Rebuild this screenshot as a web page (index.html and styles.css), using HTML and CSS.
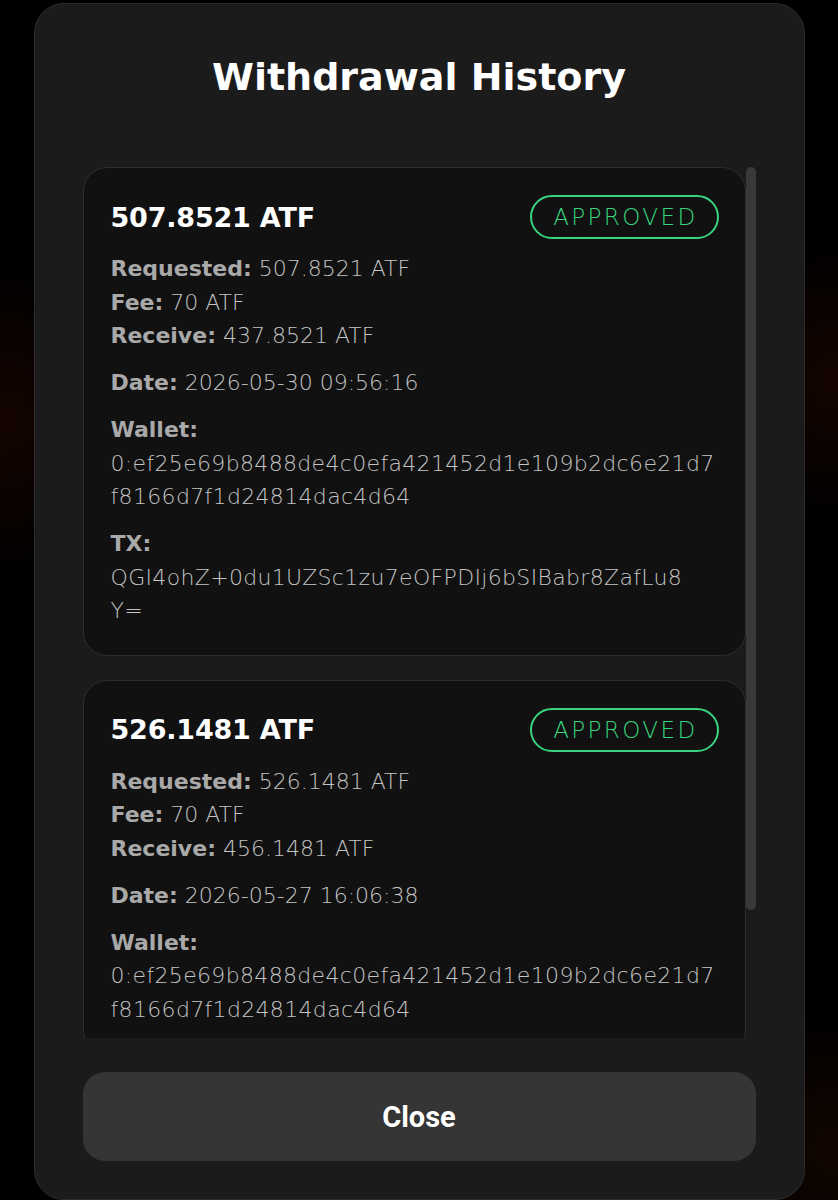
FILE: index.html
```html
<!DOCTYPE html>
<html lang="en">
<head>
    <meta charset="UTF-8">
    <meta name="viewport" content="width=device-width, initial-scale=1.0">
    <title>Withdrawal History</title>
    <link rel="stylesheet" href="styles.css">
</head>
<body>

    <!-- Modal riwayat penarikan -->
    <div class="modal">
        <h1 class="modal-title">Withdrawal History</h1>

        <div class="history-box">
            <div class="history-list">
                <div class="history-card">
                    <div class="card-head">
                        <span class="amount">507.8521 ATF</span>
                        <span class="status">APPROVED</span>
                    </div>
                    <div class="group">
                        <p><b>Requested:</b> 507.8521 ATF</p>
                        <p><b>Fee:</b> 70 ATF</p>
                        <p><b>Receive:</b> 437.8521 ATF</p>
                    </div>
                    <div class="group">
                        <p><b>Date:</b> 2026-05-30 09:56:16</p>
                    </div>
                    <div class="group">
                        <p><b>Wallet:</b></p>
                        <p class="hash">0:ef25e69b8488de4c0efa421452d1e109b2dc6e21d7f8166d7f1d24814dac4d64</p>
                    </div>
                    <div class="group">
                        <p><b>TX:</b></p>
                        <p class="hash">QGI4ohZ+0du1UZSc1zu7eOFPDIj6bSIBabr8ZafLu8<br>Y=</p>
                    </div>
                </div>

                <div class="history-card">
                    <div class="card-head">
                        <span class="amount">526.1481 ATF</span>
                        <span class="status">APPROVED</span>
                    </div>
                    <div class="group">
                        <p><b>Requested:</b> 526.1481 ATF</p>
                        <p><b>Fee:</b> 70 ATF</p>
                        <p><b>Receive:</b> 456.1481 ATF</p>
                    </div>
                    <div class="group">
                        <p><b>Date:</b> 2026-05-27 16:06:38</p>
                    </div>
                    <div class="group">
                        <p><b>Wallet:</b></p>
                        <p class="hash">0:ef25e69b8488de4c0efa421452d1e109b2dc6e21d7f8166d7f1d24814dac4d64</p>
                    </div>
                </div>
            </div>

            <!-- scrollbar -->
            <div class="scroll-track">
                <div class="scroll-thumb"></div>
            </div>
        </div>

        <button class="close-btn">Close</button>
    </div>

</body>
</html>
```

FILE: styles.css
```css
* {
    margin: 0;
    padding: 0;
    box-sizing: border-box;
}

body {
    font-family: "DejaVu Sans", sans-serif;
    background:
        radial-gradient(circle at 0 420px, rgba(60, 14, 0, 0.35), transparent 160px),
        radial-gradient(circle at 838px 380px, rgba(60, 14, 0, 0.35), transparent 140px),
        radial-gradient(circle at 838px 1150px, rgba(60, 20, 0, 0.3), transparent 140px),
        #000;
    height: 1200px;
    overflow: hidden;
}

.modal {
    width: 771px;
    height: 1197px;
    margin: 3px auto 0;
    padding: 50px 48px 0;
    background: #1b1b1b;
    border: 1px solid #2c2c2c;
    border-radius: 30px;
    display: flex;
    flex-direction: column;
}

.modal-title {
    color: #fff;
    font-size: 38px;
    font-weight: 700;
    line-height: 46px;
    text-align: center;
    margin-bottom: 67px;
}

.history-box {
    display: flex;
    height: 871px;
}

.history-list {
    flex: 1;
    overflow: hidden;
}

.scroll-track {
    width: 10px;
}

.scroll-thumb {
    height: 743px;
    background: #393939;
    border-radius: 5px;
}

.history-card {
    background: #111;
    border: 1px solid #2d2d2d;
    border-radius: 24px;
    padding: 27px 26px 27px 27px;
    margin-bottom: 24px;
}

.card-head {
    display: flex;
    justify-content: space-between;
    align-items: center;
    margin-bottom: 13px;
}

.amount {
    color: #fff;
    font-size: 27px;
    font-weight: 700;
    letter-spacing: -0.2px;
}

.status {
    height: 44px;
    line-height: 40px;
    padding: 0 19px 0 21px;
    border: 2px solid #38d47f;
    border-radius: 22px;
    color: #38d47f;
    font-size: 23px;
    font-weight: 200;
    letter-spacing: 2.4px;
}

.group + .group {
    margin-top: 13.5px;
}

.group p {
    color: #c4c4c4;
    font-size: 22px;
    font-weight: 200;
    line-height: 33.5px;
}

.group b {
    color: #a9a9a9;
    font-weight: 700;
}

.hash {
    word-break: break-all;
    letter-spacing: 0.33px;
}

.close-btn {
    margin-top: 34px;
    height: 89px;
    background: #353535;
    color: #fff;
    border: none;
    border-radius: 22px;
    font-family: Roboto, sans-serif;
    font-size: 29px;
    font-weight: 700;
}
```
